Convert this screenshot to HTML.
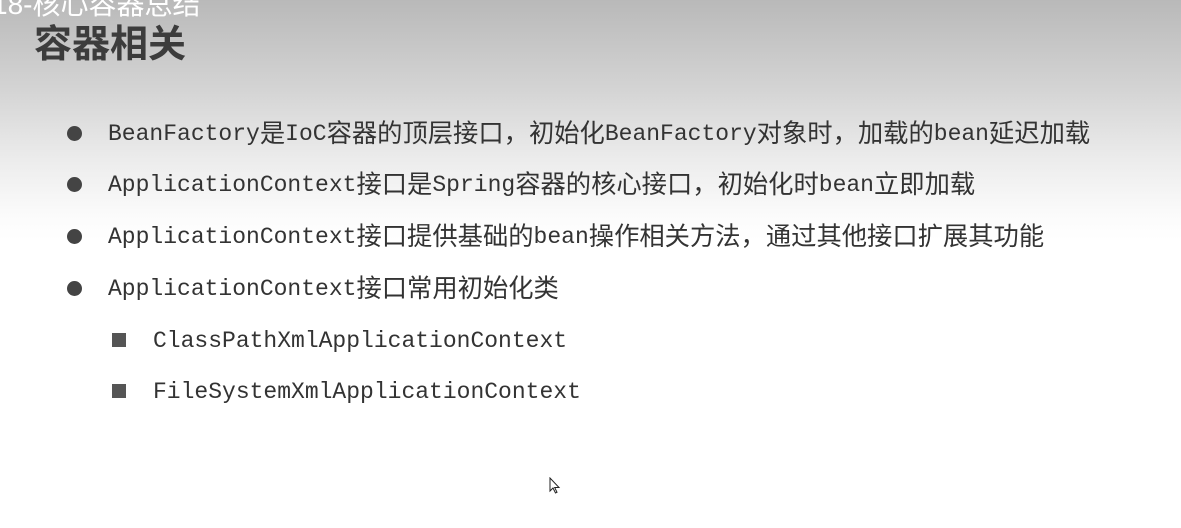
<!DOCTYPE html>
<html><head><meta charset="utf-8"><style>
body{margin:0;width:1181px;height:528px;overflow:hidden;position:relative;
background:linear-gradient(to bottom,#b9b9b9 0px,#d4d4d4 90px,#ececec 160px,#fbfbfb 215px,#fff 240px);
font-family:"Liberation Mono","Noto Sans CJK SC",monospace;}
.top{position:absolute;left:-8px;top:-17px;font:28px "Liberation Sans","Noto Sans CJK SC",sans-serif;color:#fff;}
.title{position:absolute;left:34px;top:13px;font:bold 38px "Liberation Sans","Noto Sans CJK SC",sans-serif;color:#3c3c3c;}
.l{position:absolute;left:108px;font-size:23px;color:#333;white-space:nowrap;line-height:30px;}
.l .c{font-size:25.3px;font-family:"Noto Sans CJK SC",sans-serif;line-height:30px;vertical-align:top;position:relative;top:-2px}
.d{position:absolute;left:67px;width:15px;height:15px;border-radius:50%;background:#444;}
.s{position:absolute;left:112px;width:14px;height:14px;background:#555;}
</style></head><body>
<div class="top">18-核心容器总结</div>
<div class="title">容器相关</div>
<div class="d" style="top:126px"></div>
<div class="l" style="top:119px">BeanFactory<span class="c">是</span>IoC<span class="c">容器的顶层接口，初始化</span>BeanFactory<span class="c">对象时，加载的</span>bean<span class="c">延迟加载</span></div>
<div class="d" style="top:177px"></div>
<div class="l" style="top:170px">ApplicationContext<span class="c">接口是</span>Spring<span class="c">容器的核心接口，初始化时</span>bean<span class="c">立即加载</span></div>
<div class="d" style="top:229px"></div>
<div class="l" style="top:222px">ApplicationContext<span class="c">接口提供基础的</span>bean<span class="c">操作相关方法，通过其他接口扩展其功能</span></div>
<div class="d" style="top:281px"></div>
<div class="l" style="top:274px">ApplicationContext<span class="c">接口常用初始化类</span></div>
<div class="s" style="top:333px"></div>
<div class="l" style="top:326px;left:153px">ClassPathXmlApplicationContext</div>
<div class="s" style="top:384px"></div>
<div class="l" style="top:377px;left:153px">FileSystemXmlApplicationContext</div>
<svg style="position:absolute;left:549px;top:477px" width="12" height="18" viewBox="0 0 12 18"><path d="M1 1 L1 14 L4 11 L6.5 16 L8 15.3 L5.7 10.5 L10 10.5 Z" fill="#fff" stroke="#222" stroke-width="1"/></svg>
</body></html>
